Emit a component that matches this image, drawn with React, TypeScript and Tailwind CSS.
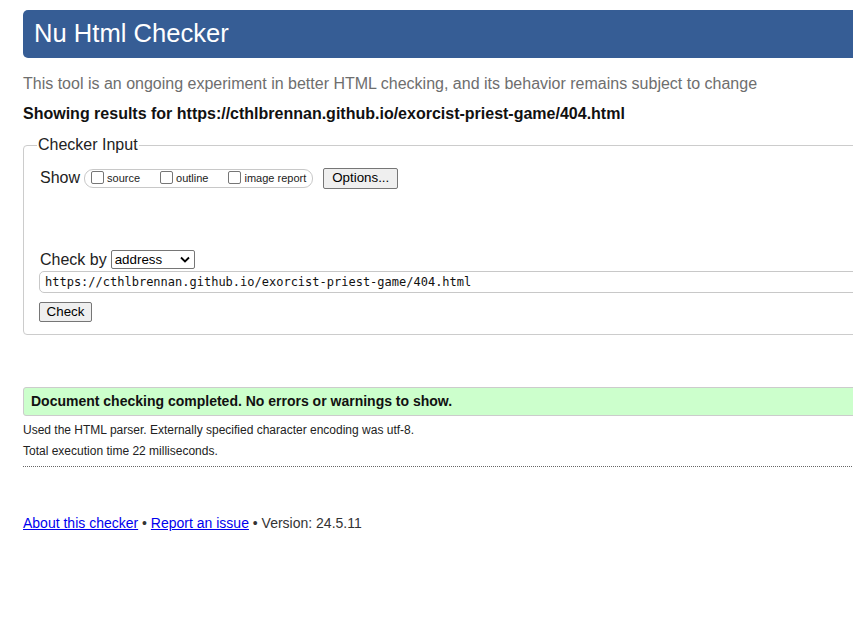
import React from "react";

export default function App() {
  return (
    <div
      className="w-[853px] h-[620px] overflow-hidden bg-white text-[#222]"
      style={{ fontFamily: '"Liberation Sans", Arial, sans-serif' }}
    >
      <div className="w-[980px] pl-[23px] pt-[10px]">
        <div className="h-[48px] rounded-[5px] bg-[#365d95] flex items-center pl-[11px]">
          <h1 className="text-[25.6px] leading-none text-white font-normal">Nu Html Checker</h1>
        </div>

        <p className="mt-[17px] text-[16px] leading-[18px] text-[#6e6e6e]">
          This tool is an ongoing experiment in better HTML checking, and its behavior remains subject to change
        </p>
        <p className="mt-[12px] text-[16px] leading-[18px] font-bold text-[#111]">
          Showing results for https://cthlbrennan.github.io/exorcist-priest-game/404.html
        </p>

        <fieldset className="mt-[13px] border border-[#cccccc] rounded-[4px] pl-[13px] pr-[14px] pb-[11px]">
          <legend className="px-[1px] text-[16px] leading-[18px] text-[#222]">Checker Input</legend>
          <div className="mt-[13px] flex items-center h-[22px] pl-[3px]">
            <span className="text-[16px] leading-[18px] mr-[4px]">Show</span>
            <div className="h-[19px] border border-[#c8c8c8] rounded-[9px] flex items-center pl-[6px] pr-[6px] text-[11px]">
              <span className="flex items-center">
                <span className="inline-block w-[13px] h-[13px] border border-[#767676] rounded-[2px] bg-white mr-[3px] relative top-[-1px]"></span>
                <span>source</span>
              </span>
              <span className="flex items-center ml-[20px]">
                <span className="inline-block w-[13px] h-[13px] border border-[#767676] rounded-[2px] bg-white mr-[3px] relative top-[-1px]"></span>
                <span>outline</span>
              </span>
              <span className="flex items-center ml-[20px]">
                <span className="inline-block w-[13px] h-[13px] border border-[#767676] rounded-[2px] bg-white mr-[3px] relative top-[-1px]"></span>
                <span>image report</span>
              </span>
            </div>
            <button className="ml-[10px] h-[21px] w-[75px] bg-[#efefef] border border-[#767676] rounded-[2px] text-[13.33px] leading-none text-black">
              Options...
            </button>
          </div>

          <div className="mt-[61px] flex items-center h-[19px] pl-[3px]">
            <span className="text-[16px] leading-[18px] mr-[4px]">Check by</span>
            <div className="h-[19px] w-[84px] border border-[#767676] rounded-[2px] bg-white flex items-center justify-between pl-[3px] pr-[4px] text-[13.33px] text-black">
              <span>address</span>
              <svg width="10" height="7" viewBox="0 0 10 7">
                <path d="M1 1.5 L5 5.5 L9 1.5" fill="none" stroke="#000" strokeWidth="1.8" />
              </svg>
            </div>
          </div>

          <div className="mt-[2px] ml-[2px] h-[22px] border border-[#c8c8c8] rounded-[5px] flex items-center pl-[5px]">
            <span
              className="text-[12px] text-[#111]"
              style={{ fontFamily: '"DejaVu Sans Mono", "Liberation Mono", monospace' }}
            >
              https://cthlbrennan.github.io/exorcist-priest-game/404.html
            </span>
          </div>

          <div className="mt-[6px] ml-[2px]">
            <button className="h-[20px] w-[53px] bg-[#efefef] border border-[#767676] rounded-[2px] text-[13.33px] leading-none text-black">
              Check
            </button>
          </div>
        </fieldset>

        <div className="mt-[52px] h-[29px] border border-[#cccccc] rounded-l-[3px] bg-[#ccffcc] flex items-center pl-[7px]">
          <span className="text-[14px] font-bold text-[#111]">
            Document checking completed. No errors or warnings to show.
          </span>
        </div>

        <p className="mt-[7px] text-[12px] leading-[14px] text-[#222]">
          Used the HTML parser. Externally specified character encoding was utf-8.
        </p>
        <p className="mt-[7px] text-[12px] leading-[14px] text-[#222]">
          Total execution time 22 milliseconds.
        </p>
        <div className="mt-[8px] border-t border-dotted border-[#666]"></div>

        <p className="mt-[48px] text-[14px] leading-[16px] text-[#333]">
          <a href="#" className="text-[#0000ee] underline">About this checker</a>
          {" • "}
          <a href="#" className="text-[#0000ee] underline">Report an issue</a>
          {" • Version: 24.5.11"}
        </p>
      </div>
    </div>
  );
}
